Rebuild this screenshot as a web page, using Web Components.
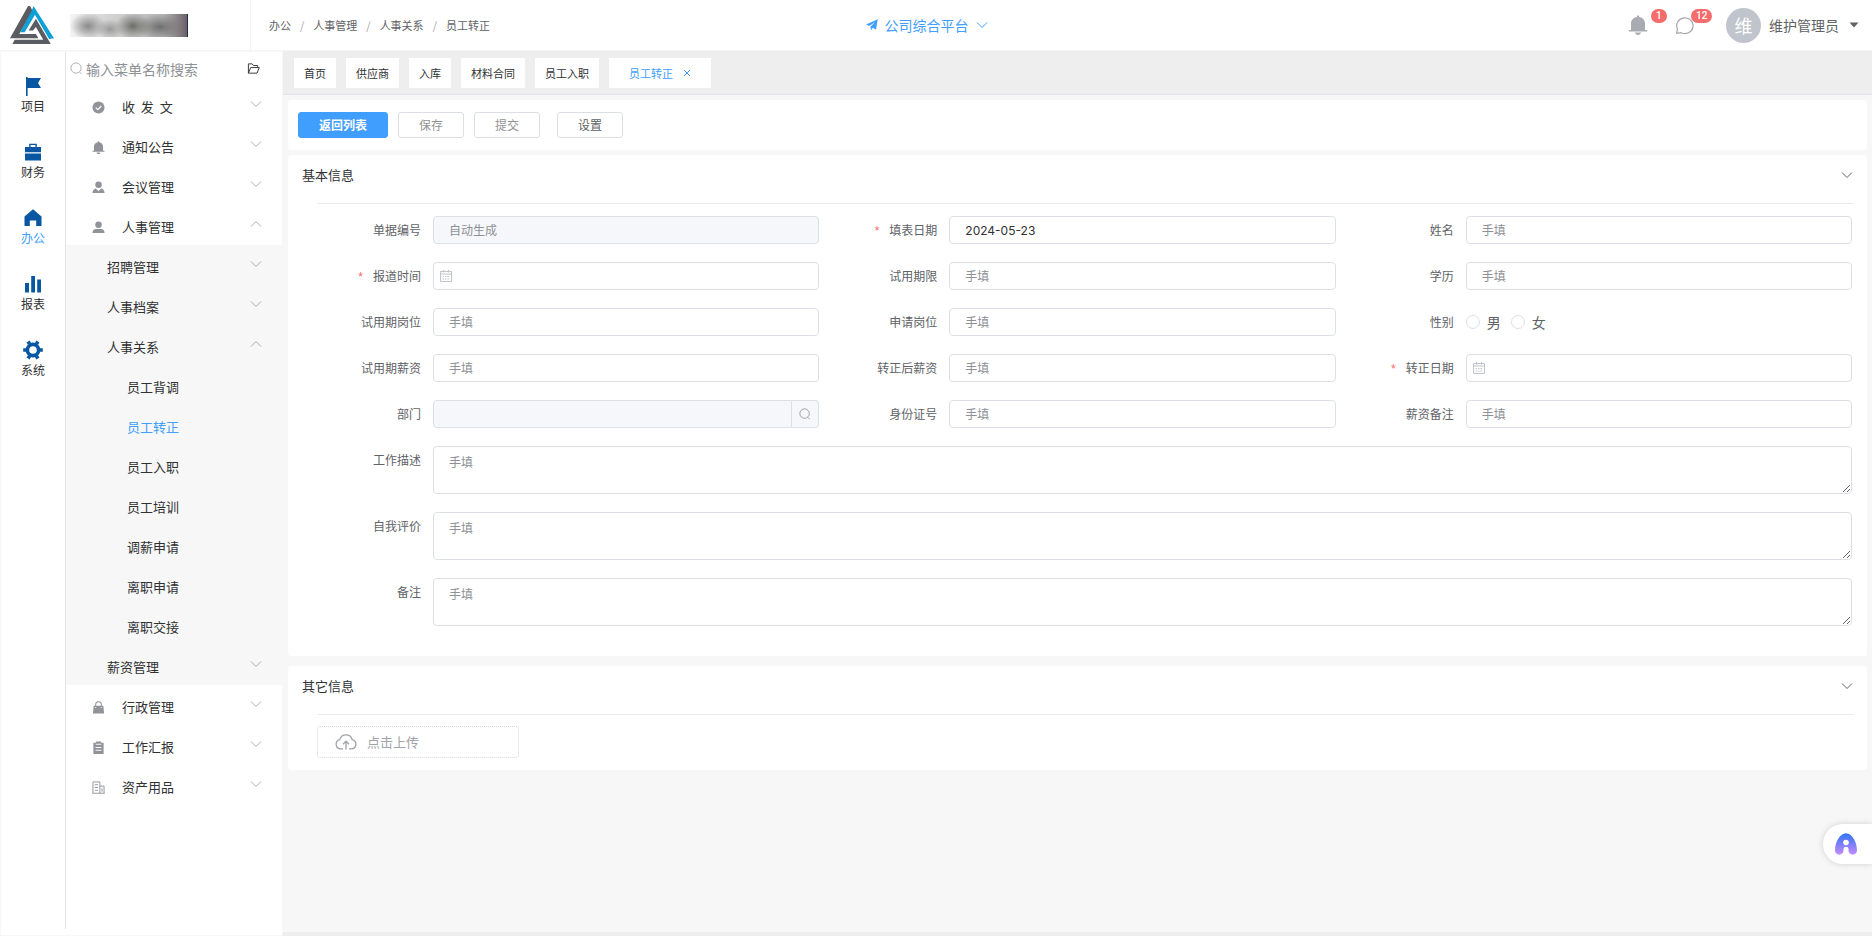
<!DOCTYPE html>
<html lang="zh-CN">
<head>
<meta charset="utf-8">
<title>员工转正</title>
<style>
  html, body { margin: 0; height: 100%; }
  body { font-family: "Noto Sans CJK SC", sans-serif; font-size: 12px; color: #303133; background: #f7f7f7; }
</style>
</head>
<body>
<app-shell>
  <app-header slot="header"></app-header>
  <nav-rail slot="rail">
    <rail-item icon="flag">项目</rail-item>
    <rail-item icon="case">财务</rail-item>
    <rail-item icon="home" active>办公</rail-item>
    <rail-item icon="bars">报表</rail-item>
    <rail-item icon="gear">系统</rail-item>
  </nav-rail>
  <side-menu slot="menu">
    <menu-row icon="check" arrow="down">收  发  文</menu-row>
    <menu-row icon="bell" arrow="down">通知公告</menu-row>
    <menu-row icon="person-v" arrow="down">会议管理</menu-row>
    <menu-row icon="person" arrow="up">人事管理</menu-row>
    <menu-row level="2" arrow="down">招聘管理</menu-row>
    <menu-row level="2" arrow="down">人事档案</menu-row>
    <menu-row level="2" arrow="up">人事关系</menu-row>
    <menu-row level="3">员工背调</menu-row>
    <menu-row level="3" active>员工转正</menu-row>
    <menu-row level="3">员工入职</menu-row>
    <menu-row level="3">员工培训</menu-row>
    <menu-row level="3">调薪申请</menu-row>
    <menu-row level="3">离职申请</menu-row>
    <menu-row level="3">离职交接</menu-row>
    <menu-row level="2" arrow="down">薪资管理</menu-row>
    <menu-row icon="bag" arrow="down">行政管理</menu-row>
    <menu-row icon="clip" arrow="down">工作汇报</menu-row>
    <menu-row icon="building" arrow="down">资产用品</menu-row>
  </side-menu>
  <tab-strip slot="tabs">
    <tab-item>首页</tab-item>
    <tab-item>供应商</tab-item>
    <tab-item>入库</tab-item>
    <tab-item>材料合同</tab-item>
    <tab-item>员工入职</tab-item>
    <tab-item active>员工转正</tab-item>
  </tab-strip>
  <tool-bar></tool-bar>
  <panel-card heading="基本信息">
    <form-grid>
      <form-field label="单据编号" placeholder="自动生成" locked></form-field>
      <form-field label="填表日期" value="2024-05-23" required></form-field>
      <form-field label="姓名" placeholder="手填"></form-field>
      <form-field label="报道时间" kind="date" required></form-field>
      <form-field label="试用期限" placeholder="手填"></form-field>
      <form-field label="学历" placeholder="手填"></form-field>
      <form-field label="试用期岗位" placeholder="手填"></form-field>
      <form-field label="申请岗位" placeholder="手填"></form-field>
      <radio-field label="性别" options="男,女"></radio-field>
      <form-field label="试用期薪资" placeholder="手填"></form-field>
      <form-field label="转正后薪资" placeholder="手填"></form-field>
      <form-field label="转正日期" kind="date" required></form-field>
      <form-field label="部门" kind="lookup" locked></form-field>
      <form-field label="身份证号" placeholder="手填"></form-field>
      <form-field label="薪资备注" placeholder="手填"></form-field>
      <form-field label="工作描述" kind="area" placeholder="手填" wide></form-field>
      <form-field label="自我评价" kind="area" placeholder="手填" wide></form-field>
      <form-field label="备注" kind="area" placeholder="手填" wide></form-field>
    </form-grid>
  </panel-card>
  <panel-card heading="其它信息" spaced>
    <upload-box>点击上传</upload-box>
  </panel-card>
</app-shell>
<assist-bubble></assist-bubble>

<script>
const ICONS = {
  down: ['0 0 12 12', '<path d="M1 3.5l5 5 5-5" fill="none" stroke="currentColor"/>'],
  up: ['0 0 12 12', '<path d="M1 8.5l5-5 5 5" fill="none" stroke="currentColor"/>'],
  caret: ['0 0 10 6', '<path d="M0.5 0.5h9L5 5.5z" fill="currentColor"/>'],
  close: ['0 0 8 8', '<path d="M1 1l6 6M7 1L1 7" fill="none" stroke="currentColor"/>'],
  search: ['0 0 14 14', '<circle cx="6.5" cy="6.5" r="5.5" fill="none" stroke="currentColor"/><path d="M10.5 11l2 2" stroke="currentColor"/>'],
  folder: ['0 0 14 12', '<path d="M1.5 11V1h4l1.5 1.8h4.5V5M1.5 11L4 5h9.2l-2.4 6z" fill="none" stroke="currentColor" stroke-linejoin="round"/>'],
  plane: ['0 0 12 12', '<path d="M11.8.2L10 10.6 6.6 8.8 5 11.6 4.4 7.8 9.5 2.8 3.2 7 .2 5.6z" fill="currentColor"/>'],
  flag: ['0 0 20 20', '<path d="M3 1h1.6v1H18l-3 5 3 5H4.6v8H3z" fill="currentColor"/>'],
  case: ['0 0 20 20', '<path d="M6.2 5V1.7h7.6V5h-1.4V3H7.600V5zM2 5h16v5.300H2zM2 11.500h16v7H2z" fill="currentColor"/>'],
  home: ['0 0 20 20', '<path d="M10 1.200l8.500 7.300V18h-5.300v-5.500H6.800V18H1.500V8.500z" fill="currentColor"/>'],
  bars: ['0 0 20 20', '<path d="M2 9h4v9.500H2zM8.200 2h3.800v16.500H8.200zM14.200 5.500H18v13h-3.800z" fill="currentColor"/>'],
  gear: ['0 0 20 20', '<circle cx="10" cy="10" r="5.600" fill="none" stroke="currentColor" stroke-width="3.600"/><g stroke="currentColor" stroke-width="3.600"><path d="M17 10h2.800M.2 10H3M13.500 3.900l1.400-2.400M6.500 3.900L5.100 1.500M13.500 16.100l1.400 2.400M6.500 16.100l-1.400 2.400"/></g>'],
  check: ['0 0 14 14', '<circle cx="7" cy="7" r="6.500" fill="currentColor"/><path d="M4 7.200l2.200 2.100L10 5.400" fill="none" stroke="#fff" stroke-width="1.300"/>'],
  bell: ['0 0 20 20', '<path d="M9 .5h2v1.600c3.600.5 6 3 6 6.700V15h2.200v1.500H.8V15H3V8.800c0-3.700 2.400-6.200 6-6.700zM7 17.500h6c-.3 1.500-1.400 2.400-3 2.400s-2.700-.9-3-2.400z" fill="currentColor"/>'],
  'person-v': ['0 0 14 14', '<circle cx="7" cy="4" r="3.500" fill="currentColor"/><path d="M.5 13c.1-3 1.400-4.500 3.700-5L7 11l2.800-3c2.300.5 3.600 2 3.700 5z" fill="currentColor"/>'],
  person: ['0 0 14 14', '<circle cx="7" cy="4" r="3.500" fill="currentColor"/><path d="M.5 13c0-3 1.500-4.500 4-4.500h5c2.500 0 4 1.500 4 4.500z" fill="currentColor"/>'],
  bag: ['0 0 14 14', '<path d="M4 6V3.800a3 3 0 0 1 6 0V6" fill="none" stroke="currentColor" stroke-width="1.100"/><path d="M1.800 5h10.400l.8 8.500H1z" fill="currentColor"/><path d="M4 6.500v1M10 6.500v1" stroke="#fff"/>'],
  clip: ['0 0 14 14', '<path d="M1.500 2h2.700V.6h5.600V2h2.700v12h-11z" fill="currentColor"/><path d="M4 3.500h6M3.800 7h6.400M3.800 10h6.400" stroke="#fff"/>'],
  building: ['0 0 14 14', '<path d="M1 13V1h7.500v12M8.500 5.500H13V13M.3 13.200h13.400M3 4h3.500M3 7h3.500M3 10h3.500M10.800 8v3.500" fill="none" stroke="currentColor"/>'],
  chat: ['0 0 22 22', '<path d="M1.800 20.200l.9-4.900A9 8.700 0 1 1 6.800 19.500z" fill="none" stroke="currentColor" stroke-width="1.400" stroke-linejoin="round"/>'],
  calendar: ['0 0 12 12', '<path d="M.5 1.500h11v10H.5zM.5 4h11M3.500 0v2.500M8.500 0v2.500" fill="none" stroke="currentColor"/><path d="M2.500 6.500h7M2.500 9h7" stroke="currentColor" stroke-dasharray="1.500 1"/>'],
  cloud: ['0 0 22 18', '<path d="M8 15.800H5.600a4.600 4.600 0 0 1-.8-9.100 6.400 6.400 0 0 1 12.400 0 4.600 4.600 0 0 1-.8 9.100H14M11 16.500V8.500M8 11.200l3-3 3 3" fill="none" stroke="currentColor" stroke-width="1.300"/>'],
  logo: ['0 0 46 40', '<path d="M18.500.7L0 33.500h29l-2.500-4.300H9.500L23 5.500 20.500.7z" fill="#5b5c61"/><path d="M24 .5L45 33.500l-5 .8L25.500 9.500 15 27.500h-4.500L22 6z" fill="#0d9fd6"/><path d="M26.500 13.500L19 25.500h4.500l3-3.500L34 35H4.800l-2.300 4.500h39.200z" fill="#5b5c61"/>'],
  assist: ['0 0 24 22', '<defs><linearGradient id="g" x1="0" y1="0" x2="0" y2="1"><stop offset="0" stop-color="#2f74f5"/><stop offset="1" stop-color="#c58bff"/></linearGradient></defs><path d="M12 .3C18 .3 23 9 23 17.500c0 5.500-8.500 5.500-8.500 0V16c0-3-5-3-5 0v1.500c0 5.500-8.500 5.500-8.500 0C1 9 6 .3 12 .3z" fill="url(#g)"/><circle cx="12" cy="9.500" r="2.800" fill="#fff"/>']
};

const BASE = `*,:host{box-sizing:border-box} button,input,textarea{font:inherit;color:inherit;margin:0}
  button{padding:0;border:0;background:none;cursor:pointer} a{color:inherit;text-decoration:none}`;

/* Registers an element whose shadow content comes from a render function. */
function element(name, css, html) {
  customElements.define(name, class extends HTMLElement {
    connectedCallback() {
      if (this.shadowRoot) return;
      const root = this.attachShadow({ mode: 'open' });
      root.innerHTML = `<style>${BASE}${css}</style>${html(this)}`;
    }
  });
}
const attr = (el, name) => el.getAttribute(name) || '';
const icon = (name, cls = '') => `<app-icon name="${name}" class="${cls}"></app-icon>`;

element('app-icon', `:host{display:inline-block;flex:none;width:12px;height:12px} svg{display:block;width:100%;height:100%}`,
  el => { const [box, body] = ICONS[attr(el, 'name')]; return `<svg viewBox="${box}" aria-hidden="true">${body}</svg>`; });

element('app-shell', `
  :host{display:grid;grid-template:51px 1fr / 283px minmax(0,1fr);min-height:100vh}
  .top{grid-column:1 / -1}
  .side{display:flex;background:#fff;border:1px solid #f7f7f7}
  .main{display:flex;flex-direction:column;border-bottom:4px solid #eee}
  .body{display:flex;flex-direction:column;gap:5px;padding:5px}`,
  () => `<div class="top"><slot name="header"></slot></div>
  <div class="side"><slot name="rail"></slot><slot name="menu"></slot></div>
  <main class="main"><slot name="tabs"></slot><div class="body"><slot></slot></div></main>`);

element('app-header', `
  :host{display:flex;height:51px;align-items:center;background:#fff;border-bottom:1px solid #f4f4f4;padding-right:13px}
  .left,.right{flex:1;display:flex;align-items:center;height:100%}
  .brand{display:flex;align-items:center;gap:15px;width:251px;height:100%;padding-left:10px;border-right:1px solid #f4f4f4}
  .logo{width:45px;height:40px}
  .name{width:118px;height:23px;border-right:1px solid #1b2a55;overflow:hidden}
  .name i{display:block;height:100%;background:
    radial-gradient(ellipse 18px 13px at 18px 12px,#8a8a8a,transparent),
    radial-gradient(ellipse 14px 10px at 40px 15px,#999,transparent),
    radial-gradient(ellipse 18px 13px at 63px 12px,#6e6e68,transparent),
    radial-gradient(ellipse 24px 13px at 90px 13px,#6f6f6f,transparent),
    linear-gradient(90deg,#f4f4f4,#ddd 20%,#b5b5b5 80%,#6b6168)}
  nav{display:flex;gap:9px;padding-left:18px;font-size:11px;line-height:16px;color:#606266}
  nav i{color:#a0a4ab;font-style:normal}
  .site{display:flex;align-items:center;gap:7px;font-size:14px;line-height:20px;color:#409eff;margin-right:6px}
  .right{justify-content:flex-end}
  .note{position:relative;display:block;color:#a8abb2}
  .bell,.chat{width:20px;height:20px;display:block}
  .note b{position:absolute;bottom:12px;left:23px;height:14px;padding:0 5px;border-radius:7px;background:#f56c6c;color:#fff;font:500 10px/14px Roboto,sans-serif}
  .note.msg{margin-left:27px;margin-right:31px} .note.msg b{left:16px}
  .avatar{display:grid;place-items:center;width:35px;height:35px;border-radius:50%;background:#c0c4cc;color:#fff;font-size:18px;line-height:20px}
  .user{display:flex;align-items:center;gap:8px;font-size:14px;line-height:20px;color:#606266}
  .caret{width:10px;height:6px;margin-left:2px}`,
  () => `<div class="left"><div class="brand">${icon('logo', 'logo')}<div class="name" aria-hidden="true"><i></i></div></div>
    <nav aria-label="面包屑"><a href="#">办公</a><i>/</i><a href="#">人事管理</a><i>/</i><a href="#">人事关系</a><i>/</i><a href="#">员工转正</a></nav></div>
  <button class="site" type="button">${icon('plane')}<span>公司综合平台</span>${icon('down')}</button>
  <div class="right">
    <button class="note" type="button" aria-label="通知">${icon('bell', 'bell')}<b>1</b></button>
    <button class="note msg" type="button" aria-label="消息">${icon('chat', 'chat')}<b>12</b></button>
    <button class="user" type="button"><span class="avatar">维</span><span>维护管理员</span>${icon('caret', 'caret')}</button></div>`);

element('nav-rail', `:host{display:block;flex:none;width:65px;padding-top:12px;border-right:1px solid #e4e4e4;margin-bottom:6px}`,
  () => `<nav aria-label="模块"><slot></slot></nav>`);

element('rail-item', `:host{display:block}
  a{display:flex;flex-direction:column;align-items:center;height:66px;padding-top:12px;font-size:12px;line-height:20px}
  app-icon{width:20px;height:20px;color:#0957a3} :host([active]){color:#409eff}`,
  el => `<a href="#">${icon(attr(el, 'icon'))}<slot></slot></a>`);

element('side-menu', `:host{display:block;flex:1;min-width:0}
  .find{display:flex;align-items:center;gap:3px;height:33px;padding:0 22px 0 4px;color:#a8abb2}
  .find app-icon{width:13px;height:13px}
  input{flex:1;min-width:0;border:0;outline:0;padding:0;background:none;font-size:14px;line-height:20px;height:22px}
  input::placeholder{color:#8d9095;opacity:1} button{color:#303133;display:flex} button app-icon{width:14px}`,
  () => `<div class="find">${icon('search')}<input type="search" aria-label="搜索菜单" placeholder="输入菜单名称搜索">
    <button type="button" aria-label="目录">${icon('folder')}</button></div><nav aria-label="菜单"><slot></slot></nav>`);

element('menu-row', `:host{display:block}
  :host([level]){background:#f7f7f7}
  .row{display:flex;width:100%;height:40px;align-items:center;padding:0 20px 0 26px;font-size:13px;line-height:20px;text-align:left;white-space:pre}
  :host([level="2"]) .row{padding-left:41px} :host([level="3"]) .row{padding-left:61px}
  :host([active]){color:#409eff}
  span{flex:1;padding-top:4px} .lead{width:13px;height:13px;margin:4px 17px 0 0;color:#909399}
  .arrow{color:#a8abb2;margin-bottom:3px}`,
  el => {
    const lead = attr(el, 'icon') ? icon(attr(el, 'icon'), 'lead') : '';
    return attr(el, 'arrow')
      ? `<button class="row" type="button" aria-expanded="${attr(el, 'arrow') === 'up'}">${lead}<span><slot></slot></span>${icon(attr(el, 'arrow'), 'arrow')}</button>`
      : `<a class="row" href="#">${lead}<span><slot></slot></span></a>`;
  });

element('tab-strip', `:host{display:flex;gap:10px;height:44px;padding:7px 11px;background:#eee;border-bottom:1px solid #e4e4ee}`,
  () => `<slot></slot>`);

element('tab-item', `:host{display:flex;align-items:center;gap:10px;height:30px;padding:0 10px;background:#fff;font-size:11px;line-height:16px}
  :host([active]){color:#409eff;padding:0 20px} button{display:flex} app-icon{width:8px;height:8px}`,
  el => `<a href="#"><slot></slot></a>${el.hasAttribute('active') ? `<button type="button" aria-label="关闭">${icon('close')}</button>` : ''}`);

element('tool-bar', `:host{display:flex;gap:10px;align-items:center;height:50px;padding:0 10px;background:#fff;border-radius:3px}
  button{width:66px;height:26px;border:1px solid #dcdfe6;border-radius:3px;font-size:12px;line-height:18px;color:#606266}
  .dim{color:#929292} .main{width:90px;background:#409eff;border-color:#409eff;color:#fff;font-weight:700} .set{margin-left:7px}`,
  () => `<button class="main" type="button">返回列表</button><button class="dim" type="button">保存</button><button class="dim" type="button">提交</button><button class="set" type="button">设置</button>`);

element('panel-card', `:host{display:block;background:#fff;border-radius:3px;padding:0 14px}
  :host([spaced]){margin-top:5px}
  header{display:flex;justify-content:space-between;align-items:center;height:40px}
  h2{margin:0;font-size:13px;line-height:20px;font-weight:400} button{display:flex;color:#606266}
  .body{margin:8px 0 0 15px;border-top:1px solid #e9eaee}`,
  el => `<header><h2>${attr(el, 'heading')}</h2><button type="button" aria-label="收起">${icon('down')}</button></header>
  <div class="body"><slot></slot></div>`);

element('form-grid', `:host{display:flow-root}
  form{display:grid;grid-template-columns:repeat(3,minmax(0,1fr));row-gap:18px;margin:12px 1px 30px -14px}
  ::slotted([wide]){grid-column:1 / -1}`, () => `<form><slot></slot></form>`);

const FIELD = `:host{display:flex;align-items:flex-start;font-size:12px}
  .name{flex:none;width:130px;padding-right:12px;line-height:28px;text-align:right;color:#606266}
  .name i{margin-right:10px;color:#f56c6c;font:12px/12px "Liberation Sans",sans-serif}`;

element('form-field', `${FIELD}
  .box{position:relative;display:flex;flex:1;min-width:0}
  input,textarea{display:block;width:100%;border:1px solid #dcdfe6;border-radius:4px;background:#fff;outline:0}
  input{height:28px;padding:0 15px;font-family:Inter,"Noto Sans CJK SC",sans-serif}
  textarea{height:48px;padding:5px 15px;line-height:20px;resize:vertical}
  ::placeholder{color:#8d9095;opacity:1}
  :host([locked]) input{background:#f5f7fa}
  :host([kind="date"]) input{padding-left:30px}
  :host([kind="lookup"]) input{border-radius:4px 0 0 4px}
  .cal{position:absolute;left:7px;top:8px;color:#c0c4cc}
  .pick{display:grid;place-items:center;flex:none;width:27px;height:28px;border:1px solid #dcdfe6;border-left:0;border-radius:0 4px 4px 0;background:#f5f7fa;color:#909399}`,
  el => {
    const kind = attr(el, 'kind'), hint = attr(el, 'placeholder');
    const star = el.hasAttribute('required') ? '<i>*</i>' : '';
    const control = kind === 'area'
      ? `<textarea id="c" placeholder="${hint}"></textarea>`
      : `<input id="c" type="text" placeholder="${hint}" value="${attr(el, 'value')}" ${el.hasAttribute('locked') ? 'disabled' : ''}>`;
    const extra = kind === 'date' ? icon('calendar', 'cal')
      : kind === 'lookup' ? `<button class="pick" type="button" aria-label="选择">${icon('search')}</button>` : '';
    return `<label class="name" for="c">${star}${attr(el, 'label')}</label><div class="box">${control}${extra}</div>`;
  });

element('radio-field', `${FIELD}
  .set{display:flex;gap:10px;height:28px;align-items:center;font-size:14px;line-height:20px;color:#606266}
  label{display:flex;align-items:center;gap:7px}
  input{appearance:none;width:14px;height:14px;border:1px solid #dcdfe6;border-radius:50%;background:#fff}
  input:checked{border:4px solid #409eff}`,
  el => `<span class="name" id="n">${attr(el, 'label')}</span><div class="set" role="radiogroup" aria-labelledby="n">
    ${attr(el, 'options').split(',').map(o => `<label><input type="radio" name="r" value="${o}">${o}</label>`).join('')}</div>`);

element('upload-box', `:host{display:block;padding:11px 0 12px}
  button{display:flex;align-items:center;gap:10px;width:202px;height:32px;padding-left:17px;border:1px dotted #d4d7de;border-radius:3px;font-size:13px;line-height:20px;color:#a0a3a9}
  app-icon{width:22px;height:18px}`, () => `<button type="button">${icon('cloud')}<slot></slot></button>`);

element('assist-bubble', `:host{position:fixed;right:0;bottom:72px}
  button{display:flex;align-items:center;width:49px;height:40px;padding-left:11px;background:#fff;border-radius:20px 0 0 20px;box-shadow:0 0 6px rgba(0,0,0,.16)}
  app-icon{width:24px;height:22px}`, () => `<button type="button" aria-label="助手">${icon('assist')}</button>`);
</script>
</body>
</html>
